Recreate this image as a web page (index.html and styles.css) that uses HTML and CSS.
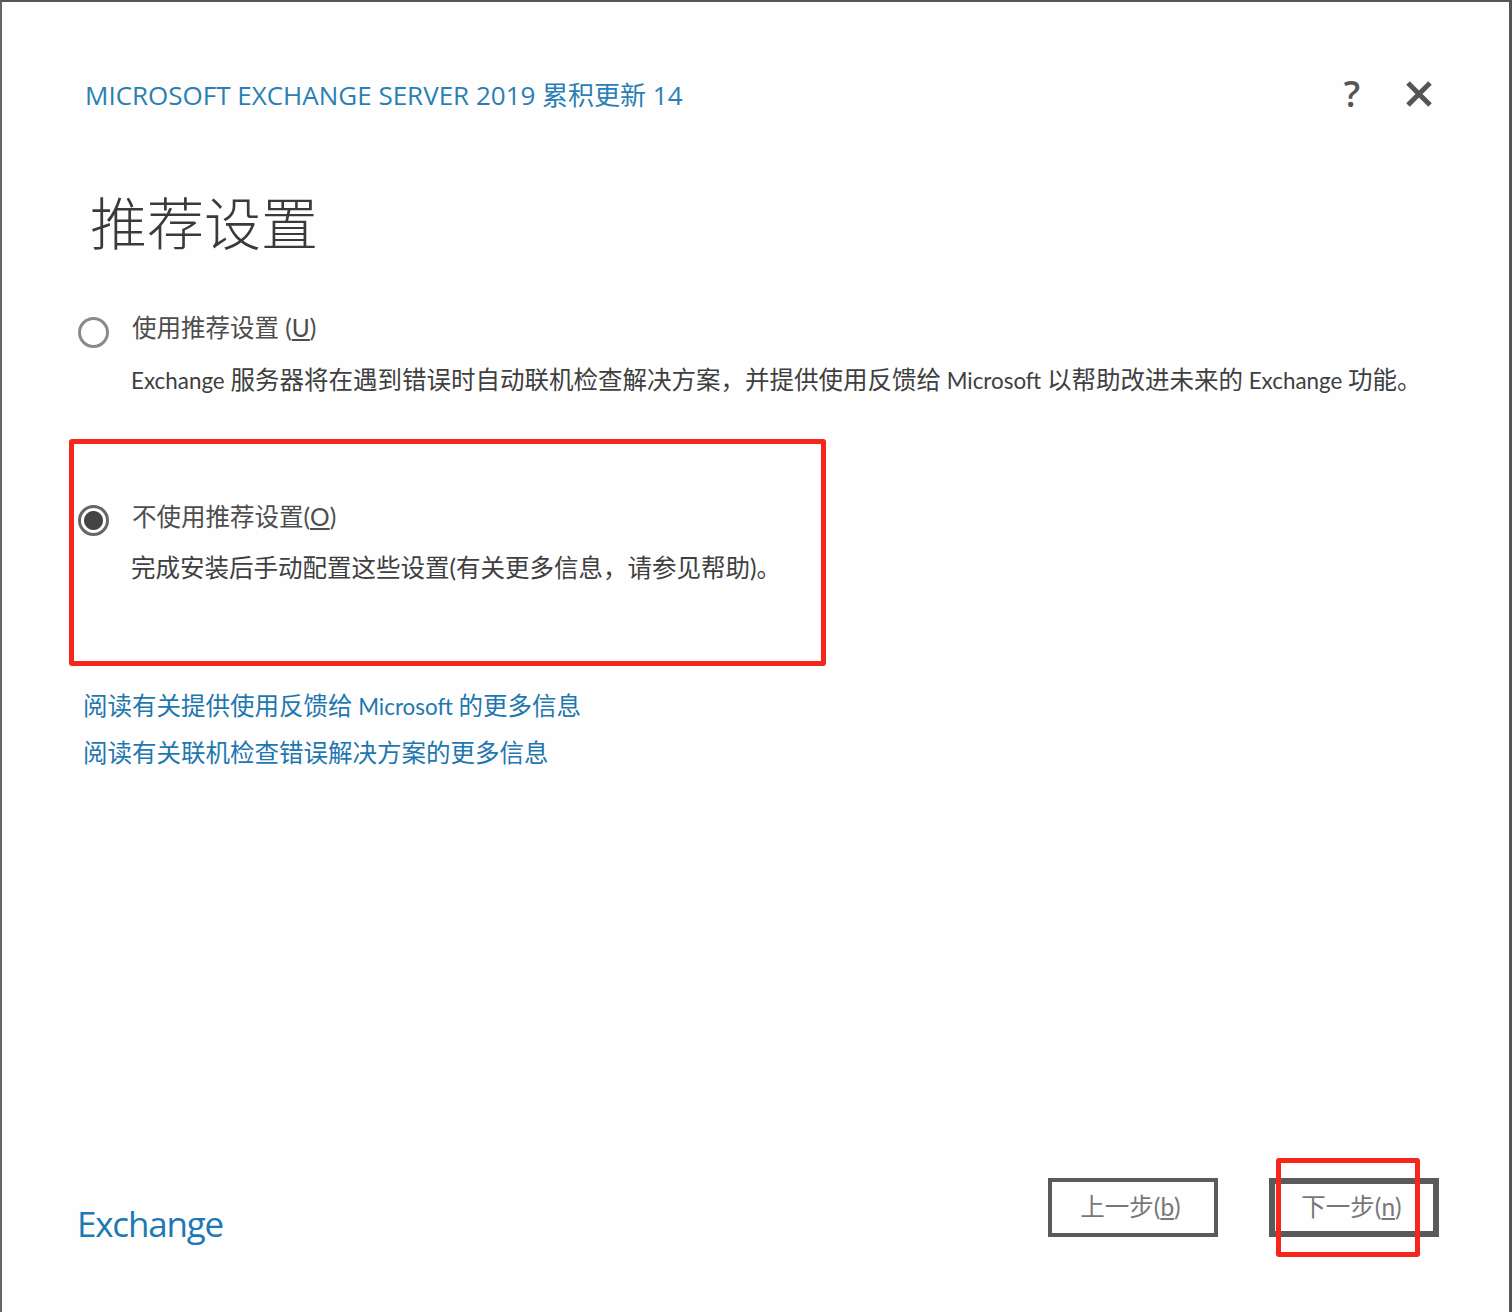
FILE: index.html
```html
<!DOCTYPE html>
<html lang="zh-CN">
<head>
  <meta charset="UTF-8" />
  <title>Microsoft Exchange Server 2019</title>
  <link rel="stylesheet" href="styles.css">
</head>
<body>
  <div class="dialog">
    <div class="top-bar">
      <div class="product">MICROSOFT EXCHANGE SERVER 2019 累积更新 14</div>
      <div class="top-icons">
        <span class="help">?</span>
        <svg class="close" width="28" height="28" viewBox="0 0 28 28"><path d="M3 3 L25 25 M25 3 L3 25" /></svg>
      </div>
    </div>

    <h1>推荐设置</h1>

    <div class="option option-first">
      <span class="radio"></span>
      <div class="option-text">
        <div class="option-label">使用推荐设置 (<u>U</u>)</div>
        <div class="option-desc"><span class="latin">Exchange </span>服务器将在遇到错误时自动联机检查解决方案，并提供使用反馈给<span class="latin"> Microsoft </span>以帮助改进未来的<span class="latin"> Exchange </span>功能。</div>
      </div>
    </div>

    <div class="marked">
      <div class="option">
        <span class="radio checked"></span>
        <div class="option-text">
          <div class="option-label">不使用推荐设置(<u>O</u>)</div>
          <div class="option-desc">完成安装后手动配置这些设置(有关更多信息，请参见帮助)。</div>
        </div>
      </div>
    </div>

    <div class="links">
      <a href="#">阅读有关提供使用反馈给<span class="latin"> Microsoft </span>的更多信息</a>
      <a href="#">阅读有关联机检查错误解决方案的更多信息</a>
    </div>

    <div class="bottom-bar">
      <div class="brand">Exchange</div>
      <div class="btn-row">
        <button type="button" class="btn">上一步(<u>b</u>)</button>
        <button type="button" class="btn btn-default">下一步(<u>n</u>)<span class="mark-next"></span></button>
      </div>
    </div>
  </div>
</body>
</html>
```

FILE: styles.css
```css
* {
  box-sizing: border-box;
}

body {
  margin: 0;
  background: #fff;
  font-family: Lato, "Noto Sans CJK SC", sans-serif;
  color: #444;
}

.dialog {
  height: 1312px;
  border-top: 2px solid #555;
  border-left: 2px solid #666;
  border-right: 3px solid #555;
  background: #fefefe;
  display: flex;
  flex-direction: column;
  padding: 0 70px 0 67px;
}

.top-bar {
  display: flex;
  justify-content: space-between;
  align-items: center;
  height: 40px;
  margin-top: 72px;
  padding-left: 16px;
}

.product {
  font-family: "Open Sans", "Noto Sans CJK SC", sans-serif;
  font-size: 26px;
  color: #2a7fb5;
  white-space: nowrap;
}

.top-icons {
  display: flex;
  align-items: center;
  gap: 45px;
  margin-right: 6px;
}

.help {
  font-family: "Open Sans", sans-serif;
  font-size: 36px;
  font-weight: 600;
  line-height: 40px;
  color: #555;
}

.close {
  display: block;
}

.close path {
  stroke: #555;
  stroke-width: 5;
  fill: none;
}

h1 {
  margin: 74px 0 0 21px;
  font-size: 57px;
  line-height: 70px;
  font-weight: 300;
  color: #3a3a3a;
}

.latin {
  font-size: 22.4px;
}

.option {
  display: flex;
  gap: 22px;
  padding-left: 9px;
}

.option-first {
  margin-top: 52px;
}

.radio {
  flex: none;
  width: 31px;
  height: 31px;
  margin-top: 7px;
  border: 3px solid #8a8a8a;
  border-radius: 50%;
  background: #fff;
}

.radio.checked {
  margin-top: 6px;
  border-color: #666;
  background: radial-gradient(circle, #444 0 9px, #fff 10px);
}

.option-label {
  font-size: 24.5px;
  line-height: 36px;
  color: #4d4d4d;
  margin-left: 1px;
}

.option-desc {
  margin-top: 17px;
  font-size: 24.5px;
  line-height: 34px;
  color: #3f3f3f;
  white-space: nowrap;
}

.marked {
  width: 757px;
  height: 227px;
  margin-top: 41px;
  border: 5px solid #f5261b;
  border-radius: 3px;
  padding-top: 55px;
}

.marked .option {
  margin-left: -5px;
}

.marked .option-desc {
  margin-top: 16px;
}

.links {
  display: flex;
  flex-direction: column;
  gap: 10px;
  margin: 22px 0 0 14px;
}

.links a {
  font-size: 24.5px;
  line-height: 36px;
  color: #1f77b0;
  text-decoration: none;
}

.bottom-bar {
  margin-top: auto;
  display: flex;
  justify-content: space-between;
  align-items: flex-start;
  padding: 0 0 63px 8px;
}

.brand {
  font-family: "Open Sans", sans-serif;
  font-size: 35px;
  line-height: 50px;
  color: #1e78b4;
  margin-top: 21px;
  letter-spacing: -1.2px;
}

.btn-row {
  display: flex;
  gap: 51px;
}

.btn {
  position: relative;
  width: 170px;
  height: 59px;
  border: 4px solid #5a5a5a;
  background: #fefefe;
  font-family: inherit;
  font-size: 24.5px;
  color: #777;
  padding: 0 5px 4px 0;
}

.btn-default {
  border-width: 6px;
}

.mark-next {
  position: absolute;
  left: 1px;
  top: -26px;
  width: 144px;
  height: 99px;
  border: 5px solid #f5261b;
  border-radius: 3px;
}
```
